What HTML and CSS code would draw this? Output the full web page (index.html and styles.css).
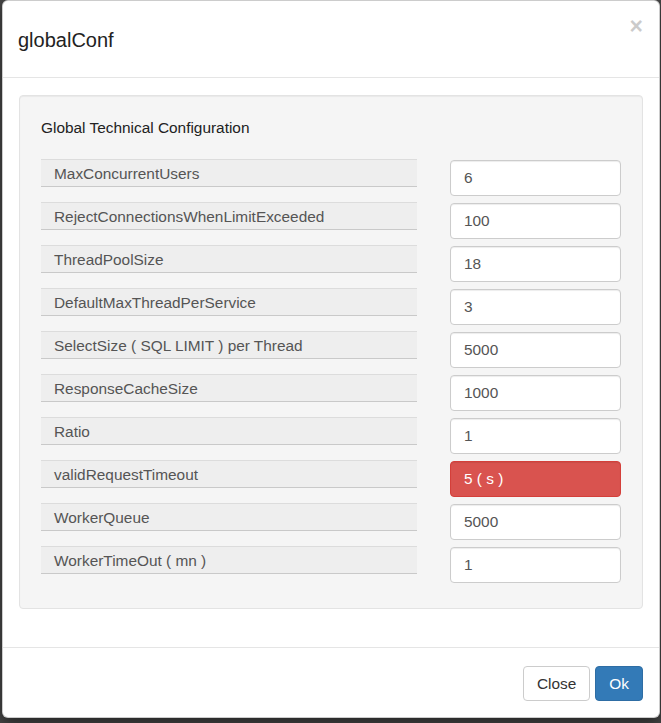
FILE: index.html
```html
<!DOCTYPE html>
<html>
<head>
<meta charset="utf-8">
	<title>globalConf</title>
	<link rel="stylesheet" href="styles.css">
</head>
<body>
	<div class="modal">
		<div class="modal-header">
			<h4 class="modal-title">globalConf</h4>
			<button class="close" type="button">&times;</button>
		</div>
		<div class="modal-body">
			<div class="well">
				<h5 class="well-title">Global Technical Configuration</h5>
				<div class="conf-row">
					<label class="conf-label">MaxConcurrentUsers</label>
					<input class="conf-input" type="text" value="6">
				</div>
				<div class="conf-row">
					<label class="conf-label">RejectConnectionsWhenLimitExceeded</label>
					<input class="conf-input" type="text" value="100">
				</div>
				<div class="conf-row">
					<label class="conf-label">ThreadPoolSize</label>
					<input class="conf-input" type="text" value="18">
				</div>
				<div class="conf-row">
					<label class="conf-label">DefaultMaxThreadPerService</label>
					<input class="conf-input" type="text" value="3">
				</div>
				<div class="conf-row">
					<label class="conf-label">SelectSize ( SQL LIMIT ) per Thread</label>
					<input class="conf-input" type="text" value="5000">
				</div>
				<div class="conf-row">
					<label class="conf-label">ResponseCacheSize</label>
					<input class="conf-input" type="text" value="1000">
				</div>
				<div class="conf-row">
					<label class="conf-label">Ratio</label>
					<input class="conf-input" type="text" value="1">
				</div>
				<div class="conf-row">
					<label class="conf-label">validRequestTimeout</label>
					<input class="conf-input danger" type="text" value="5 ( s )">
				</div>
				<div class="conf-row">
					<label class="conf-label">WorkerQueue</label>
					<input class="conf-input" type="text" value="5000">
				</div>
				<div class="conf-row">
					<label class="conf-label">WorkerTimeOut ( mn )</label>
					<input class="conf-input" type="text" value="1">
				</div>
			</div>
		</div>
		<div class="modal-footer">
			<button class="btn btn-default" type="button">Close</button>
			<button class="btn btn-primary" type="button">Ok</button>
		</div>
	</div>
</body>
</html>
```

FILE: styles.css
```css
*{
	margin: 0;
	padding: 0;
	box-sizing: border-box;
}
body{
	height: 723px;
	overflow: hidden;
	background: #464646;
	font-family: "Liberation Sans", Arial, sans-serif;
	font-size: 15.4px;
	color: #333;
}
.modal{
	width: 658px;
	margin-left: 2px;
	background: #fff;
	border: 1px solid rgba(0,0,0,0.2);
	border-radius: 6px;
	box-shadow: 0 5px 15px rgba(0,0,0,0.5);
}
.modal-header{
	display: flex;
	justify-content: space-between;
	align-items: flex-start;
	padding: 25px 16px 23px 15px;
	border-bottom: 1px solid #e5e5e5;
}
.modal-title{
	font-size: 20px;
	font-weight: normal;
	line-height: 28px;
	color: #222;
}
.close{
	background: none;
	border: 0;
	font-family: "Liberation Sans", Arial, sans-serif;
	font-size: 23px;
	font-weight: bold;
	line-height: 1;
	color: #000;
	opacity: 0.2;
	margin-top: -11px;
	cursor: pointer;
}
.modal-body{
	padding: 17px 16px 16px;
}
.well{
	background: #f5f5f5;
	border: 1px solid #e3e3e3;
	border-radius: 4px;
	box-shadow: inset 0 1px 1px rgba(0,0,0,0.05);
	padding: 21px 21px 20px 21px;
	margin-bottom: 22px;
}
.well-title{
	font-size: 15.4px;
	font-weight: normal;
	line-height: 22px;
	color: #222;
	margin-bottom: 20px;
}
.conf-row{
	display: flex;
	align-items: flex-start;
	gap: 33px;
	height: 37px;
	margin-bottom: 6px;
}
.conf-row:last-child{
	margin-bottom: 5px;
}
.conf-label{
	width: 376px;
	height: 28px;
	padding: 1px 13px 0;
	line-height: 25px;
	background: #eeeeee;
	border-top: 1px solid #dcdcdc;
	border-bottom: 1px solid #c9c9c9;
	color: #555;
}
.conf-input{
	width: 171px;
	height: 36px;
	margin-top: 1px;
	padding: 0 13px;
	font-family: "Liberation Sans", Arial, sans-serif;
	font-size: 15.4px;
	color: #555;
	background: #fff;
	border: 1px solid #ccc;
	border-radius: 4px;
	box-shadow: inset 0 1px 1px rgba(0,0,0,0.075);
}
.conf-input.danger{
	background: #d9534f;
	border-color: #d43f3a;
	color: #fff;
}
.modal-footer{
	display: flex;
	justify-content: flex-end;
	gap: 5px;
	padding: 18px 16px 16px;
	border-top: 1px solid #e5e5e5;
}
.btn{
	height: 35px;
	padding: 0 13px;
	font-family: "Liberation Sans", Arial, sans-serif;
	font-size: 15.4px;
	line-height: 33px;
	border: 1px solid transparent;
	border-radius: 4px;
	cursor: pointer;
}
.btn-default{
	background: #fff;
	border-color: #ccc;
	color: #333;
}
.btn-primary{
	background: #337ab7;
	border-color: #2e6da4;
	color: #fff;
}
```
